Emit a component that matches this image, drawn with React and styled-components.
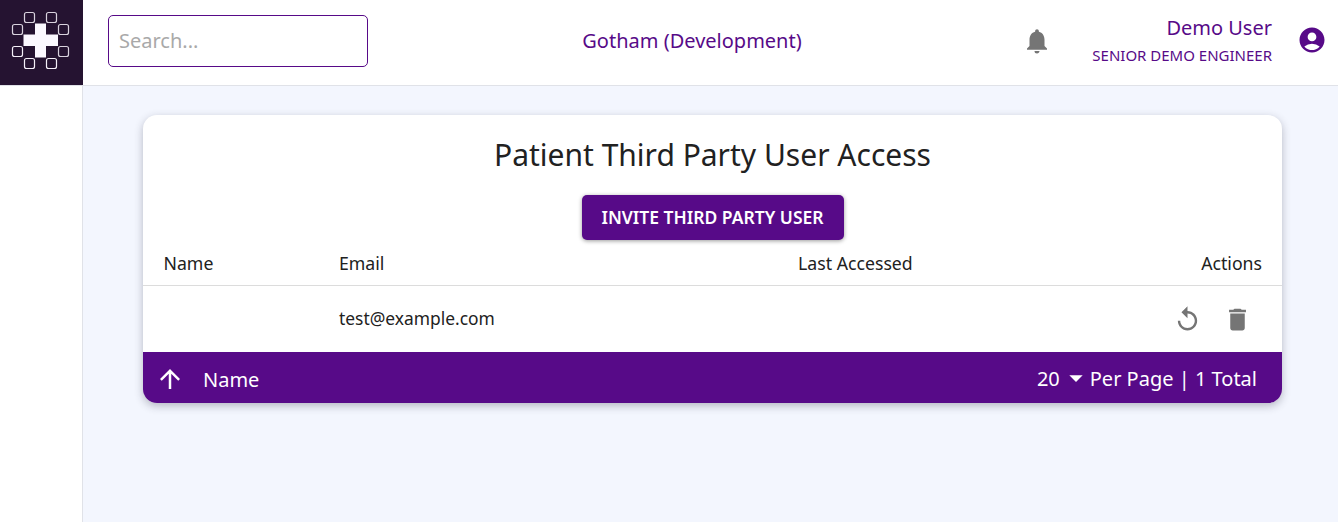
import React from "react";
import styled, { createGlobalStyle } from "styled-components";
import { MdNotifications, MdAccountCircle, MdReplay, MdDelete, MdArrowUpward, MdArrowDropDown } from "react-icons/md";

const Global = createGlobalStyle`
  html, body { margin: 0; padding: 0; height: 100%; background: #fff; }
  body { font-family: "Noto Sans", "Open Sans", sans-serif; color: #212121; }
  * { box-sizing: border-box; }
`;
const PURPLE = "#570a88";

const Page = styled.div`width: 1338px; height: 522px; display: flex; flex-direction: column; overflow: hidden;`;
const Header = styled.header`height: 86px; flex: none; display: flex; background: #fff; border-bottom: 1px solid #e0e2e8;`;
const LogoBox = styled.div`width: 83px; height: 85px; flex: none; background: #251331; display: flex; align-items: center; justify-content: center;`;
const SearchCell = styled.div`width: 285px; flex: none; padding: 15px 0 0 25px;`;
const SearchBox = styled.input`
  width: 260px; height: 52px; border: 1px solid ${PURPLE}; border-radius: 5px; padding: 0 10px 2px;
  font: 400 20px "Noto Sans", sans-serif; outline: none;
  &::placeholder { color: #a9a9a9; opacity: 1; }
`;
const Org = styled.div`width: 648px; flex: none; text-align: center; color: ${PURPLE}; font-size: 20px; padding-top: 28px; line-height: 25px;`;
const Right = styled.div`flex: 1; display: flex; align-items: flex-start;`;
const BellWrap = styled.div`width: 34px; margin-left: 6px; padding-top: 26px; color: #757575; font-size: 30px; line-height: 0;`;
const UserInfo = styled.div`width: 216px; text-align: right; color: ${PURPLE};`;
const UserName = styled.div`font-size: 20px; line-height: 26px; padding-top: 15px;`;
const UserRole = styled.div`font-size: 15px; line-height: 19px; padding-top: 5px;`;
const AvatarWrap = styled.div`margin-left: 25px; padding-top: 25px; color: ${PURPLE}; font-size: 30px; line-height: 0;`;

const Body = styled.div`flex: 1; display: flex; min-height: 0;`;
const Sidebar = styled.aside`width: 83px; flex: none; background: #fff; border-right: 1px solid #e0e2e8;`;
const Main = styled.main`flex: 1; background: #f3f6fe; padding: 29px 56px 0 60px;`;
const Card = styled.section`
  width: 1139px; height: 288px; background: #fff; border-radius: 14px; overflow: hidden;
  box-shadow: 0 3px 8px rgba(40, 40, 60, 0.3); display: flex; flex-direction: column;
`;
const Title = styled.h1`margin: 0; font-weight: 400; font-size: 30px; line-height: 40px; text-align: center; padding-top: 20px; color: #212121;`;
const ButtonRow = styled.div`display: flex; justify-content: center; padding-top: 20px;`;
const InviteButton = styled.button`
  width: 262px; height: 45px; border: 0; border-radius: 5px; background: ${PURPLE}; color: #fff;
  font: 600 17.5px "Noto Sans", sans-serif; box-shadow: 0 1px 4px rgba(0,0,0,.4); padding: 0 0 2px;
`;
const Row = styled.div`
  display: grid; grid-template-columns: 175.5px 459px 1fr 200px; padding: 0 20px 0 20.5px; align-items: center;
`;
const HeadRow = styled(Row)`height: 46px; border-bottom: 1px solid #dcdcdc; font-size: 17.7px; font-weight: 400; color: #212121;`;
const DataRow = styled(Row)`height: 66px; font-size: 17.4px; color: #212121; padding-bottom: 3px;`;
const ActionsHead = styled.div`text-align: right;`;
const Actions = styled.div`display: flex; justify-content: flex-end; gap: 21px; color: #757575; font-size: 29px; line-height: 0; margin-right: 10.5px; padding-top: 3px;`;
const Footer = styled.footer`
  height: 51px; background: ${PURPLE}; color: #fff; display: flex; align-items: center; padding: 0 25px 0 12px; font-size: 20px;
`;
const SortIcon = styled.span`font-size: 30px; line-height: 0; display: inline-flex; padding-top: 3px;`;
const SortLabel = styled.span`margin-left: 18px; padding-top: 3px;`;
const Pager = styled.div`margin-left: auto; display: flex; align-items: center; padding-top: 1px;`;
const Caret = styled.span`font-size: 32px; line-height: 0; display: inline-flex; margin: 0 -2px 0 0;`;

const Logo = () => {
  const sq = [[24,12],[46,12],[12,24],[58,24],[12,46],[58,46],[24,58],[46,58]];
  return (
    <svg width="83" height="85" viewBox="0 0 83 85">
      {sq.map(([x,y],i) => (
        <rect key={i} x={x+0.5} y={y+0.5} width="10" height="10" rx="2" fill="none" stroke={y===12||(y===24)||(y===46&&x===58)? "#d9d2de":"#f4eff8"} strokeWidth="1.2" />
      ))}
      <path d="M35 23.5h11V34.5h12V46h-12V57.5H35V46H23.5V34.5H35z" fill="#fbf8ff" />
    </svg>
  );
};

export default function App() {
  return (
    <Page>
      <Global />
      <Header>
        <LogoBox><Logo /></LogoBox>
        <SearchCell><SearchBox placeholder="Search..." /></SearchCell>
        <Org>Gotham (Development)</Org>
        <Right>
          <BellWrap><MdNotifications /></BellWrap>
          <UserInfo>
            <UserName>Demo User</UserName>
            <UserRole>SENIOR DEMO ENGINEER</UserRole>
          </UserInfo>
          <AvatarWrap><MdAccountCircle /></AvatarWrap>
        </Right>
      </Header>
      <Body>
        <Sidebar />
        <Main>
          <Card>
            <Title>Patient Third Party User Access</Title>
            <ButtonRow><InviteButton>INVITE THIRD PARTY USER</InviteButton></ButtonRow>
            <HeadRow>
              <div>Name</div><div>Email</div><div>Last Accessed</div><ActionsHead>Actions</ActionsHead>
            </HeadRow>
            <DataRow>
              <div></div><div>test@example.com</div><div></div>
              <Actions><MdReplay /><MdDelete /></Actions>
            </DataRow>
            <Footer>
              <SortIcon><MdArrowUpward /></SortIcon>
              <SortLabel>Name</SortLabel>
              <Pager>20 <Caret><MdArrowDropDown /></Caret> Per Page | 1 Total</Pager>
            </Footer>
          </Card>
        </Main>
      </Body>
    </Page>
  );
}
